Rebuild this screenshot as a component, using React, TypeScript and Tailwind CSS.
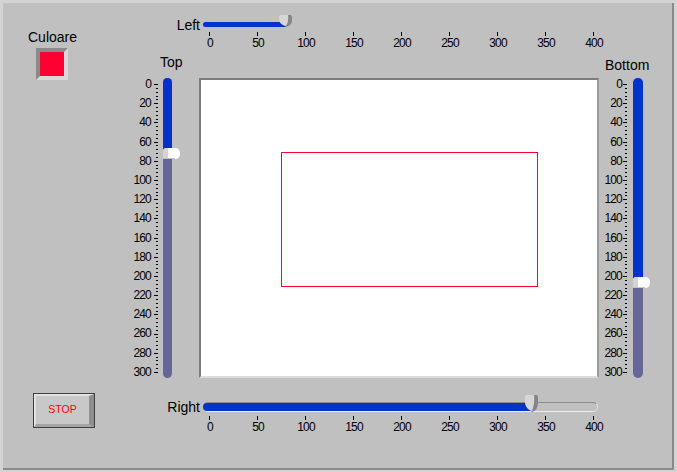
import React from 'react';

// pixels per unit on every scale, and where value 0 sits from the track start
const K = 0.96;
const OFF = 6;

const HORIZ = [0, 50, 100, 150, 200, 250, 300, 350, 400];
const VERT = Array.from({ length: 16 }, (_, i) => i * 20);

const HThumb = ({ h }: { h: number }) => (
  <svg width={13} height={h} viewBox={`0 0 13 ${h}`} className="block">
    <path d={`M1 0 H12 L13 2 V${h * 0.45} Q13 ${h - 2} 7 ${h} Q1 ${h - 3} 0 ${h * 0.45} V1 Z`} fill="#858585" />
    <path d={`M1 0 H9 Q10 ${h * 0.5} 7 ${h - 1} Q1 ${h - 3} 0 ${h * 0.45} V1 Z`} fill="#d6d6d6" />
  </svg>
);

const VThumb = () => (
  <svg width={17} height={11} viewBox="0 0 17 11" className="block">
    <path d="M2 0 H12 Q17 0 17 5.5 Q17 11 12 11 H0 V2 Z" fill="#ffffff" />
    <path d="M0 2 L2 0 H5 V11 H0 Z" fill="#d4d4d4" />
    <path d="M0 10.5 H12" stroke="#c4c4c4" />
  </svg>
);

interface HSliderProps {
  label: string;
  value: number;
  thin?: boolean;
}

const HSlider: React.FC<HSliderProps> = ({ label, value, thin }) => {
  const pos = OFF + value * K;
  const trackH = thin ? 5 : 10;
  return (
    <div className="flex">
      <div className="w-[73px] shrink-0 pt-[7px]">
        <div className={`flex items-center justify-end pr-[3px] text-[14px] ${thin ? 'h-[5px]' : 'h-[10px]'}`}>
          <span className="leading-[16px]">{label}</span>
        </div>
      </div>
      <div className="flex flex-col">
        <div className="relative pt-[7px]">
          <div
            className={`flex w-[395px] rounded-full ${
              thin ? 'h-[5px]' : 'h-[10px] border-t border-t-[#8c8c8c] border-b border-b-[#ececec] border-r border-r-[#e4e4e4]'
            }`}
          >
            <div className="h-full rounded-l-full bg-[#0033cc]" style={{ width: pos }} />
          </div>
          <div className="absolute top-0" style={{ left: pos - 7 }}>
            <HThumb h={7 + trackH} />
          </div>
        </div>
        <div className={`flex ml-[-17px] ${thin ? 'mt-[5px]' : 'mt-[4px]'}`}>
          {HORIZ.map((v) => (
            <div key={v} className="w-[48px] flex flex-col">
              <div className="ml-[23px] w-px h-[4px] bg-black" />
              <div className="mt-[1px] text-center text-[12px] leading-[12px] tracking-[-0.8px]">{v}</div>
            </div>
          ))}
        </div>
      </div>
    </div>
  );
};

interface VSliderProps {
  label: string;
  value: number;
  labelCls: string;
  bodyMt: string;
  numW: string;
  tickMl: string;
  trackMl: string;
  trackW: string;
}

const VSlider: React.FC<VSliderProps> = ({ label, value, labelCls, bodyMt, numW, tickMl, trackMl, trackW }) => {
  const pos = OFF + value * K;
  return (
    <div className="flex flex-col">
      <div className={`text-[14px] leading-[16px] ${labelCls}`}>{label}</div>
      <div className={`flex items-start h-[300px] ${bodyMt}`}>
        <div className={`${numW} flex flex-col items-end mt-[-3px] text-[12px] tracking-[-0.8px]`}>
          {VERT.map((v) => (
            <div key={v} className="h-[19.2px] leading-[19.2px]">
              {v}
            </div>
          ))}
        </div>
        <svg width={4} height={300} className={`block ${tickMl}`} shapeRendering="crispEdges">
          {Array.from({ length: 76 }, (_, i) => {
            const y = Math.round(OFF + i * 3.84) + 0.5;
            return <line key={i} x1={i % 5 === 0 ? 0 : 2} x2={4} y1={y} y2={y} stroke="#000" />;
          })}
        </svg>
        <div className={`relative ${trackMl}`}>
          <div className={`flex flex-col h-[300px] ${trackW} rounded-full overflow-hidden bg-[#666699]`}>
            <div className="bg-[#0033cc]" style={{ height: pos }} />
          </div>
          <div className="absolute left-0" style={{ top: pos - 5 }}>
            <VThumb />
          </div>
        </div>
      </div>
    </div>
  );
};

const rect = { left: 80, top: 72, right: 336, bottom: 206 };

export default function App() {
  return (
    <div className="w-[677px] h-[472px] bg-[#d3d3d3] pt-[3px] pl-[3px] pr-[3px] pb-[2px] font-['Liberation_Sans',Arial,sans-serif] text-black">
      <div className="flex h-full bg-[#c0c0c0] border-r-2 border-b-2 border-[#8a8a8a]">
        {/* colour indicator and stop button */}
        <div className="w-[127px] shrink-0 flex flex-col items-start">
          <div className="ml-[25px] mt-[26px] text-[14px] leading-[16px]">Culoare</div>
          <div className="ml-[33px] mt-[3px] w-[32px] h-[32px] border-4 border-t-[#8a8a8a] border-l-[#8a8a8a] border-r-[#d8d8d8] border-b-[#d8d8d8] bg-[#ff0033]" />
          <button className="ml-[30px] mt-auto mb-[40px] w-[62px] h-[35px] border border-[#404040] bg-[#c8c8c8] p-0">
            <div className="h-full flex items-center justify-center border-t-2 border-l-2 border-t-[#e2e2e2] border-l-[#e2e2e2] border-r-[5px] border-r-[#8e8e8e] border-b-[3px] border-b-[#a4a4a4] text-[10.5px] text-[#ff0000]">
              STOP
            </div>
          </button>
        </div>

        <div className="flex flex-col">
          <div className="h-[51px] pt-[12px]">
            <HSlider label="Left" value={rect.left} thin />
          </div>

          <div className="flex items-start">
            <div className="w-[69px] shrink-0">
              <VSlider
                label="Top"
                value={rect.top}
                labelCls="ml-[30px]"
                bodyMt="mt-[8px]"
                numW="w-[21px]"
                tickMl="ml-[3px]"
                trackMl="ml-[5px]"
                trackW="w-[9px]"
              />
            </div>

            {/* picture */}
            <div className="mt-[24px] w-[400px] h-[300px] border-2 border-t-[#7c7c7c] border-l-[#7c7c7c] border-r-[#9a9a9a] border-b-[#dcdcdc] bg-white">
              <svg width={396} height={296} className="block" shapeRendering="crispEdges">
                <rect
                  x={rect.left + 0.5}
                  y={rect.top + 0.5}
                  width={rect.right - rect.left}
                  height={rect.bottom - rect.top}
                  fill="none"
                  stroke="#ff0033"
                />
              </svg>
            </div>

            <VSlider
              label="Bottom"
              value={rect.bottom}
              labelCls="ml-[6px] mt-[3px]"
              bodyMt="mt-[5px]"
              numW="w-[23px]"
              tickMl="ml-[1px]"
              trackMl="ml-[6px]"
              trackW="w-[10px]"
            />
          </div>

          <div className="pt-[17px]">
            <HSlider label="Right" value={rect.right} />
          </div>
        </div>
      </div>
    </div>
  );
}
